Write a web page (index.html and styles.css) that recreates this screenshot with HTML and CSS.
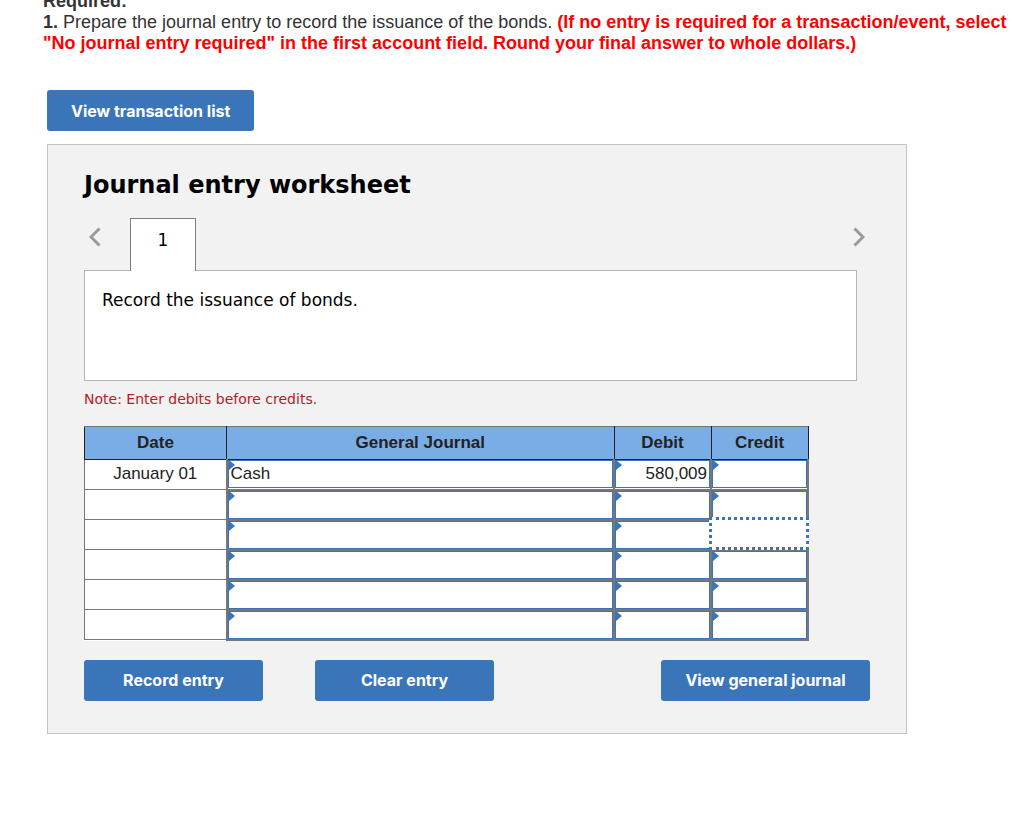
FILE: index.html
```html
<!DOCTYPE html>
<html lang="en">
  <head>
    <meta charset="UTF-8" />
    <title>Journal entry worksheet</title>
    <link rel="stylesheet" href="styles.css">
  </head>
  <body>
    <div class="question">
      <div><b>Required:</b></div>
      <b>1.</b> Prepare the journal entry to record the issuance of the bonds.
      <b class="hint">(If no entry is required for a transaction/event, select "No journal entry required" in the first account field. Round your final answer to whole dollars.)</b>
    </div>

    <button type="button" class="btn btn-list">View transaction list</button>

    <form class="worksheet">
      <h1>Journal entry worksheet</h1>

      <div class="tabs">
        <button type="button" class="arrow" aria-label="Previous">
          <svg width="12" height="20" viewBox="0 0 12 20"><path d="M10.500 1.500L2 10l8.500 8.500" /></svg>
        </button>
        <button type="button" class="tab">1</button>
        <button type="button" class="arrow arrow-next" aria-label="Next">
          <svg width="12" height="20" viewBox="0 0 12 20"><path d="M1.500 1.500L10 10l-8.500 8.500" /></svg>
        </button>
      </div>
      <div class="description">Record the issuance of bonds.</div>

      <p class="note">Note: Enter debits before credits.</p>

      <table class="journal">
        <colgroup>
          <col class="col-date" />
          <col class="col-account" />
          <col class="col-amount" />
          <col class="col-amount" />
        </colgroup>
        <thead>
          <tr>
            <th>Date</th>
            <th>General Journal</th>
            <th>Debit</th>
            <th>Credit</th>
          </tr>
        </thead>
        <tbody>
          <tr>
            <td>January 01</td>
            <td class="entry"><input type="text" aria-label="Account 1" value="Cash" /></td>
            <td class="entry amount"><input type="text" aria-label="Debit 1" value="580,009" /></td>
            <td class="entry amount"><input type="text" aria-label="Credit 1" /></td>
          </tr>
          <tr>
            <td></td>
            <td class="entry"><input type="text" aria-label="Account 2" /></td>
            <td class="entry amount"><input type="text" aria-label="Debit 2" /></td>
            <td class="entry amount"><input type="text" aria-label="Credit 2" /></td>
          </tr>
          <tr>
            <td></td>
            <td class="entry"><input type="text" aria-label="Account 3" /></td>
            <td class="entry amount"><input type="text" aria-label="Debit 3" /></td>
            <td class="entry amount selected"><input type="text" aria-label="Credit 3" /></td>
          </tr>
          <tr>
            <td></td>
            <td class="entry"><input type="text" aria-label="Account 4" /></td>
            <td class="entry amount"><input type="text" aria-label="Debit 4" /></td>
            <td class="entry amount"><input type="text" aria-label="Credit 4" /></td>
          </tr>
          <tr>
            <td></td>
            <td class="entry"><input type="text" aria-label="Account 5" /></td>
            <td class="entry amount"><input type="text" aria-label="Debit 5" /></td>
            <td class="entry amount"><input type="text" aria-label="Credit 5" /></td>
          </tr>
          <tr>
            <td></td>
            <td class="entry"><input type="text" aria-label="Account 6" /></td>
            <td class="entry amount"><input type="text" aria-label="Debit 6" /></td>
            <td class="entry amount"><input type="text" aria-label="Credit 6" /></td>
          </tr>
        </tbody>
      </table>

      <div class="actions">
        <button type="button" class="btn btn-entry">Record entry</button>
        <button type="reset" class="btn btn-entry">Clear entry</button>
        <button type="button" class="btn btn-journal">View general journal</button>
      </div>
    </form>
  </body>
</html>
```

FILE: styles.css
```css
* {
  box-sizing: border-box;
}
body {
  margin: 0;
  padding: 0 8px 40px 47px;
  background-color: #fff;
  color: #333;
  font-family: Arial, "Liberation Sans", sans-serif;
  font-size: 18px;
}
/* the first line is scrolled partly out of view */
.question {
  margin: -9px 0 36px -4px;
  line-height: 21px;
}
.hint {
  color: #f00;
}

.btn {
  height: 41px;
  padding: 0 24px;
  border: none;
  border-radius: 3px;
  background-color: #3a75b9;
  color: #fff;
  font-family: Inter, sans-serif;
  font-size: 16px;
  font-weight: 700;
  cursor: pointer;
}
.btn:hover {
  background-color: #2f639f;
}
.btn-list {
  display: block;
  min-width: 207px;
}
.btn-entry {
  min-width: 179px;
}
.btn-journal {
  min-width: 209px;
  margin-left: auto;
}

.worksheet {
  max-width: 860px;
  margin-top: 13px;
  padding: 24px 36px 32px;
  border: 1px solid #c4c4c4;
  background-color: #f2f2f2;
}
.worksheet h1 {
  margin: 0 0 17px;
  color: #000;
  font-family: Verdana, "DejaVu Sans", sans-serif;
  font-size: 24px;
  line-height: 32px;
}

.tabs {
  display: flex;
  align-items: flex-start;
  margin-bottom: -1px;
  padding: 0 5px;
}
.arrow {
  width: 12px;
  height: 20px;
  margin-top: 9px;
  padding: 0;
  border: none;
  background: none;
  cursor: pointer;
}
.arrow svg {
  display: block;
  fill: none;
  stroke: #999;
  stroke-width: 3;
}
.arrow-next {
  margin-left: auto;
}
.tab {
  position: relative;
  width: 66px;
  height: 53px;
  margin-left: 29px;
  padding: 0 0 10px;
  border: 1px solid #808080;
  border-bottom: none;
  background-color: #fff;
  color: #000;
  font-family: Verdana, "DejaVu Sans", sans-serif;
  font-size: 17px;
}
.description {
  min-height: 111px;
  margin-right: 13px;
  padding: 17px;
  border: 1px solid #b4b4b4;
  background-color: #fff;
  color: #000;
  font-family: Verdana, "DejaVu Sans", sans-serif;
  font-size: 17px;
  line-height: 24px;
}
.note {
  margin: 8px 0 17px;
  color: #b22024;
  font-family: Verdana, "DejaVu Sans", sans-serif;
  font-size: 14px;
  line-height: 20px;
}

.journal {
  width: 100%;
  max-width: 725px;
  border-collapse: collapse;
  table-layout: fixed;
  background-color: #fff;
  color: #222;
  font-size: 17px;
}
.col-date {
  width: 142px;
}
.col-amount {
  width: 97px;
}
.journal th {
  height: 33px;
  padding: 0;
  border: 1px solid #222;
  border-top-color: #777;
  background-color: #7aace6;
}
.journal td {
  height: 30px;
  padding: 0 0 2px;
  border: 1px solid #777;
  text-align: center;
}
.journal .entry {
  position: relative;
  padding: 0;
  border-width: 2px;
}
.journal tr:first-child .entry {
  border-top-width: 1px;
}
.entry input {
  display: block;
  width: 100%;
  height: 28px;
  padding: 0 2px;
  border: 1px solid #3a75b9;
  border-radius: 0;
  background-color: #fff;
  color: #222;
  font-family: inherit;
  font-size: inherit;
  outline: none;
}
.amount input {
  text-align: right;
}
/* small arrow in the corner of every editable cell */
.entry::before {
  content: "";
  position: absolute;
  top: 0;
  left: 1px;
  border: 5px solid transparent;
  border-left: 6px solid #3a75b9;
  border-right: none;
}
.selected::after {
  content: "";
  position: absolute;
  inset: -4px -2px -1px -3px;
  border: 3px dotted #3a75b9;
  background-color: #fff;
  pointer-events: none;
}

.actions {
  display: flex;
  gap: 52px;
  margin-top: 19px;
}
```
